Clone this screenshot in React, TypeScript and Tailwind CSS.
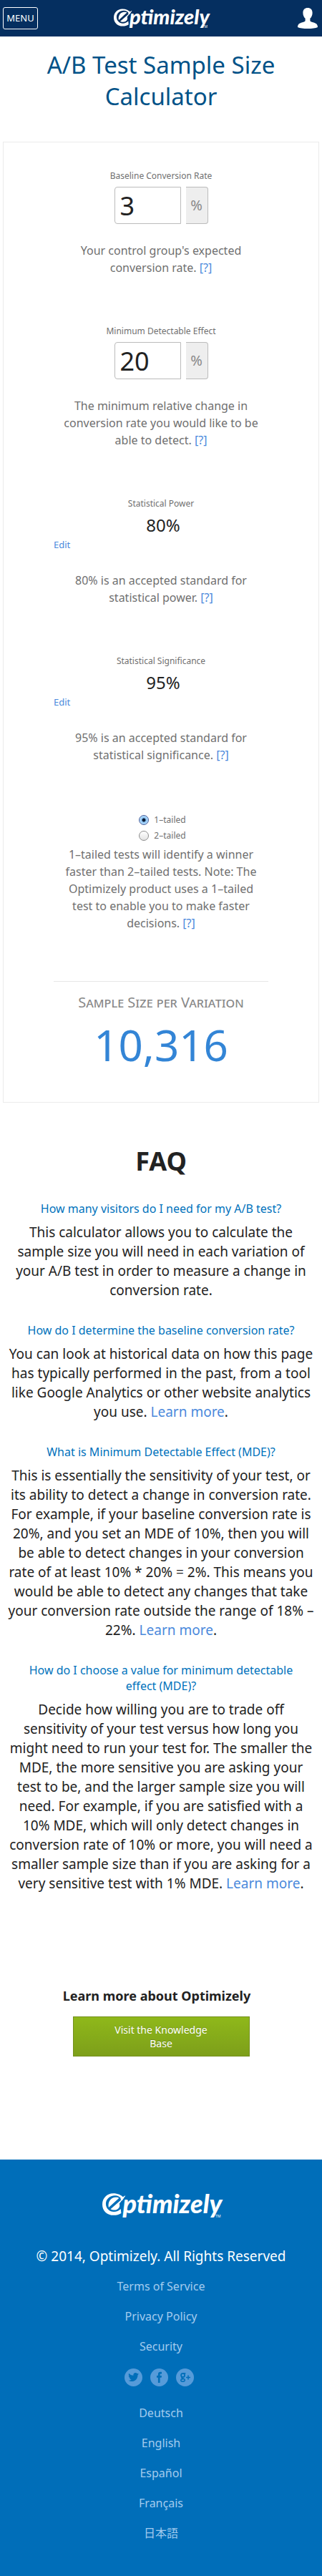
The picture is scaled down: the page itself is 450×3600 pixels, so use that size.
import { useState, type ReactNode } from 'react';

function Logo({ large = false }: { large?: boolean }) {
  return (
    <a
      href="#home"
      aria-label="Optimizely"
      className={
        large
          ? 'relative flex h-[35px] w-[165px] items-start text-white'
          : 'relative flex h-7 w-[130px] items-start text-white'
      }
    >
      <svg
        viewBox="0 0 100 93"
        className={large ? 'h-[31px] w-[33px] shrink-0' : 'h-[25px] w-[26px] shrink-0'}
        aria-hidden="true"
      >
        <path
          fill="currentColor"
          fillRule="evenodd"
          d="M46 0C66 0 80 7 89 17L81 23C74 14 65 9 54 9C31 9 15 25 15 44C15 64 30 78 49 78C60 78 70 74 78 66L80 84C71 90 60 93 48 93C20 93 0 74 0 47C0 20 20 0 46 0Z"
        />
        <path
          fill="currentColor"
          d="M27 60C22 39 34 19 54 17C62 16 67 17 71 20ZM98 9L72 44C78 58 66 71 50 71C44 71 39 70 35 67L79 28L81 23L75 22Z"
        />
        <path fill="currentColor" d="M98 9L84 31L77 25Z" />
      </svg>
      <span
        className={
          large
            ? '-ml-1 -mt-1 font-[Lato] text-[36px] leading-[36px] font-black italic'
            : '-ml-1 -mt-1 font-[Lato] text-[29px] leading-[29px] font-black italic'
        }
      >
        ptimizely
      </span>
      <span className="absolute -right-px bottom-0 text-[5px] leading-[6px]">TM</span>
    </a>
  );
}

function Field({ id, label, value }: { id: string; label: string; value: string }) {
  const [text, setText] = useState(value);
  return (
    <>
      <label htmlFor={id} className="block text-xs leading-[18px] text-[#707070]">
        {label}
      </label>
      <div className="mt-1.5 flex justify-center gap-[7px]">
        <input
          id={id}
          value={text}
          onChange={(e) => setText(e.target.value)}
          className="h-[52px] w-[93px] rounded-l-sm border border-[#bbb] bg-white px-[7px] text-4xl text-[#222] outline-none"
        />
        <span className="flex h-[52px] w-[31px] items-center justify-center rounded-r-sm border border-l-0 border-[#bbb] bg-[#eee] text-xl text-[#8a8a8a]">
          %
        </span>
      </div>
    </>
  );
}

function Fixed({ label, value }: { label: string; value: string }) {
  return (
    <>
      <h3 className="text-xs leading-[18px] text-[#707070]">{label}</h3>
      <p className="mt-1.5 pl-1.5 text-2xl leading-[30px] text-[#222]">{value}</p>
      <a href="#edit" className="mt-[3px] block text-left text-[13px] leading-[18px] text-[#4a89dc]">
        Edit
      </a>
    </>
  );
}

function Help({ children }: { children: ReactNode }) {
  return (
    <p className="text-base leading-6 text-[#707070]">
      {children}{' '}
      <a href="#help" className="text-[#4a89dc]">
        [?]
      </a>
    </p>
  );
}

function Tail({ label, checked, onPick }: { label: string; checked: boolean; onPick: () => void }) {
  return (
    <label className="flex h-[22px] items-center justify-center gap-[7px] pl-1 text-xs text-[#707070]">
      <input
        type="radio"
        name="tails"
        checked={checked}
        onChange={onPick}
        className="h-3.5 w-3.5 appearance-none rounded-full border border-[#8c8c8c] bg-linear-to-b from-white to-[#e4e4e4] checked:border-[#4a5f9c] checked:bg-[radial-gradient(circle,#0b1a33_0,#0b1a33_2px,#8cc4f4_3px,#b5dcfa_6px)]"
      />
      {label}
    </label>
  );
}

function Question({ title, more = false, children }: { title: string; more?: boolean; children: ReactNode }) {
  return (
    <section className="mb-[31px]">
      <h3 className="mx-auto max-w-[400px] text-base leading-[22px] text-[#0072bc]">{title}</h3>
      <p className="mt-[9px] text-[19px] leading-[27px] text-[#222]">
        {children}
        {more && (
          <>
            {' '}
            <a href="#learn-more" className="text-[#4a89dc]">
              Learn more
            </a>
            .
          </>
        )}
      </p>
    </section>
  );
}

const legal = ['Terms of Service', 'Privacy Policy', 'Security'];
const languages = ['Deutsch', 'English', 'Español', 'Français', '日本語'];

function FooterLinks({ items }: { items: string[] }) {
  return (
    <ul>
      {items.map((item) => (
        <li key={item} className="h-[42px] text-base leading-[42px]">
          <a href="#footer" className="text-[#a3cbee]">
            {item}
          </a>
        </li>
      ))}
    </ul>
  );
}

function Social({ label, children }: { label: string; children: ReactNode }) {
  return (
    <a href="#social" aria-label={label} className="block h-[25px] w-[25px]">
      <svg viewBox="0 0 25 25" className="h-full w-full" aria-hidden="true">
        <circle cx="12.5" cy="12.5" r="12.5" fill="#569bd9" />
        {children}
      </svg>
    </a>
  );
}

export default function App() {
  const [tails, setTails] = useState(1);
  return (
    <div className="bg-white text-center font-['Noto_Sans','Noto_Sans_CJK_JP',sans-serif] text-[#222]">
      <header className="grid h-[51px] grid-cols-[1fr_auto_1fr] items-center bg-[#052f60] pr-1.5 pl-1">
        <button
          type="button"
          className="h-[31px] w-[49px] justify-self-start rounded-[3px] border border-white text-[13px] leading-none text-white"
        >
          MENU
        </button>
        <div className="pt-px">
          <Logo />
        </div>
        <a href="#account" aria-label="Account" className="justify-self-end">
          <svg viewBox="0 0 28 29" className="h-[29px] w-7" fill="#fff" aria-hidden="true">
            <path d="M14 0C18 0 20.6 2.6 20.6 7C20.6 10.5 19.2 13.2 17.4 14.8V18C17.6 19 19 19.4 21.5 20.2C26.5 21.6 28 23.5 28 27C25 28.4 20 29 14 29S3 28.4 0 27C0 23.5 1.5 21.6 6.5 20.2C9 19.4 10.4 19 10.6 18V14.8C8.8 13.2 7.4 10.5 7.4 7C7.4 2.6 10 0 14 0Z" />
          </svg>
        </a>
      </header>

      <main className="px-1 pt-[18px] pb-36">
        <h1 className="mx-auto max-w-[400px] text-[33px] leading-[44px] text-[#005288]">
          A/B Test Sample Size Calculator
        </h1>

        <form className="mt-[41px] border border-[#ebebeb] px-[70px] pt-[38px] pb-[50px]">
          <div className="flex flex-col gap-[68px]">
            <section>
              <Field id="baseline" label="Baseline Conversion Rate" value="3" />
              <div className="mt-[25px]">
                <Help>Your control group's expected conversion rate.</Help>
              </div>
            </section>
            <section>
              <Field id="effect" label="Minimum Detectable Effect" value="20" />
              <div className="mt-[25px]">
                <Help>The minimum relative change in conversion rate you would like to be able to detect.</Help>
              </div>
            </section>
            <section>
              <Fixed label="Statistical Power" value="80%" />
              <div className="mt-[29px]">
                <Help>80% is an accepted standard for statistical power.</Help>
              </div>
            </section>
            <section>
              <Fixed label="Statistical Significance" value="95%" />
              <div className="mt-[29px]">
                <Help>95% is an accepted standard for statistical significance.</Help>
              </div>
            </section>
            <section>
              <Tail label="1–tailed" checked={tails === 1} onPick={() => setTails(1)} />
              <Tail label="2–tailed" checked={tails === 2} onPick={() => setTails(2)} />
              <div className="mx-auto mt-[3px] max-w-[284px]">
                <Help>
                  1–tailed tests will identify a winner faster than 2–tailed tests. Note: The Optimizely product uses a
                  1–tailed test to enable you to make faster decisions.
                </Help>
              </div>
            </section>
          </div>
          <hr className="mt-[69px] border-t border-[#e6e6e6]" />
          <h2 className="mt-3.5 text-xl leading-[30px] text-[#888] [font-variant-caps:small-caps]">
            Sample Size per Variation
          </h2>
          <output className="mt-3.5 block text-6xl leading-[60px] text-[#3385d6]">10,316</output>
        </form>

        <h2 className="mt-[60px] mb-[33px] text-4xl leading-[44px] font-bold">FAQ</h2>
        <div className="px-1">
          <Question title="How many visitors do I need for my A/B test?">
            This calculator allows you to calculate the sample size you will need in each variation of your A/B test in
            order to measure a change in conversion rate.
          </Question>
          <Question title="How do I determine the baseline conversion rate?" more>
            You can look at historical data on how this page has typically performed in the past, from a tool like
            Google Analytics or other website analytics you use.
          </Question>
          <Question title="What is Minimum Detectable Effect (MDE)?" more>
            This is essentially the sensitivity of your test, or its ability to detect a change in conversion rate. For
            example, if your baseline conversion rate is 20%, and you set an MDE of 10%, then you will be able to detect
            changes in your conversion rate of at least 10% * 20% = 2%. This means you would be able to detect any
            changes that take your conversion rate outside the range of 18% – 22%.
          </Question>
          <Question title="How do I choose a value for minimum detectable effect (MDE)?" more>
            Decide how willing you are to trade off sensitivity of your test versus how long you might need to run your
            test for. The smaller the MDE, the more sensitive you are asking your test to be, and the larger sample size
            you will need. For example, if you are satisfied with a 10% MDE, which will only detect changes in
            conversion rate of 10% or more, you will need a smaller sample size than if you are asking for a very
            sensitive test with 1% MDE.
          </Question>
        </div>

        <h3 className="mt-[130px] pr-3 text-lg leading-[27px] font-bold">Learn more about Optimizely</h3>
        <a
          href="#knowledge-base"
          className="mx-auto mt-[15px] flex h-14 w-[247px] items-center justify-center border border-[#74901f] bg-linear-to-b from-[#8fb81a] to-[#7d9f1a] px-12 text-sm leading-[19px] text-white [text-shadow:0_-1px_0_rgba(0,0,0,0.2)]"
        >
          Visit the Knowledge Base
        </a>
      </main>

      <footer className="bg-[#006eb9] pt-[47px] pb-[41px]">
        <div className="flex justify-center">
          <Logo large />
        </div>
        <p className="mt-10 mb-[7px] text-[19px] leading-[27px] text-white">© 2014, Optimizely. All Rights Reserved</p>
        <FooterLinks items={legal} />
        <div className="mt-2.5 mb-4 flex justify-center gap-[11px] pr-[5px] text-[#006eb9]">
          <Social label="Twitter">
            <path
              fill="currentColor"
              d="M20 7.6c-.6.3-1.2.4-1.8.5.6-.4 1.1-1 1.3-1.7-.6.3-1.2.6-1.9.7a3 3 0 0 0-5.2 2.7C9.9 9.7 7.7 8.5 6.2 6.7c-.8 1.4-.4 3.1.9 4-.5 0-.9-.2-1.3-.4 0 1.5 1 2.7 2.4 3-.4.1-.9.1-1.3 0 .4 1.2 1.5 2.1 2.8 2.1-1.2 1-2.8 1.4-4.4 1.3 5.7 3.5 13.2.2 13.2-7.7.6-.4 1.1-.9 1.5-1.4z"
            />
          </Social>
          <Social label="Facebook">
            <path
              fill="currentColor"
              d="M10.9 20v-7.2H9V10h1.9V8.2c0-2.4 1.3-3.4 3.2-3.4.8 0 1.6.1 1.9.1v2.6h-1.3c-.9 0-1.1.4-1.1 1.1V10h2.4l-.4 2.8h-2V20z"
            />
          </Social>
          <Social label="Google Plus">
            <g fill="none" stroke="currentColor">
              <circle cx="9.6" cy="9.4" r="2.5" strokeWidth="1.8" />
              <path
                strokeWidth="1.6"
                d="M13.4 6.7H10M8.5 12c-1.5 1 .2 1.6 1.7 2.2 1.7.7 2.5 1.5 1.8 2.9-.9 1.7-5.2 1.5-5.2-.6 0-1.4 1.4-2 3.2-1.9"
              />
              <path strokeWidth="1.5" d="M17 9.5v6M14 12.5h6" />
            </g>
          </Social>
        </div>
        <FooterLinks items={languages} />
      </footer>
    </div>
  );
}
